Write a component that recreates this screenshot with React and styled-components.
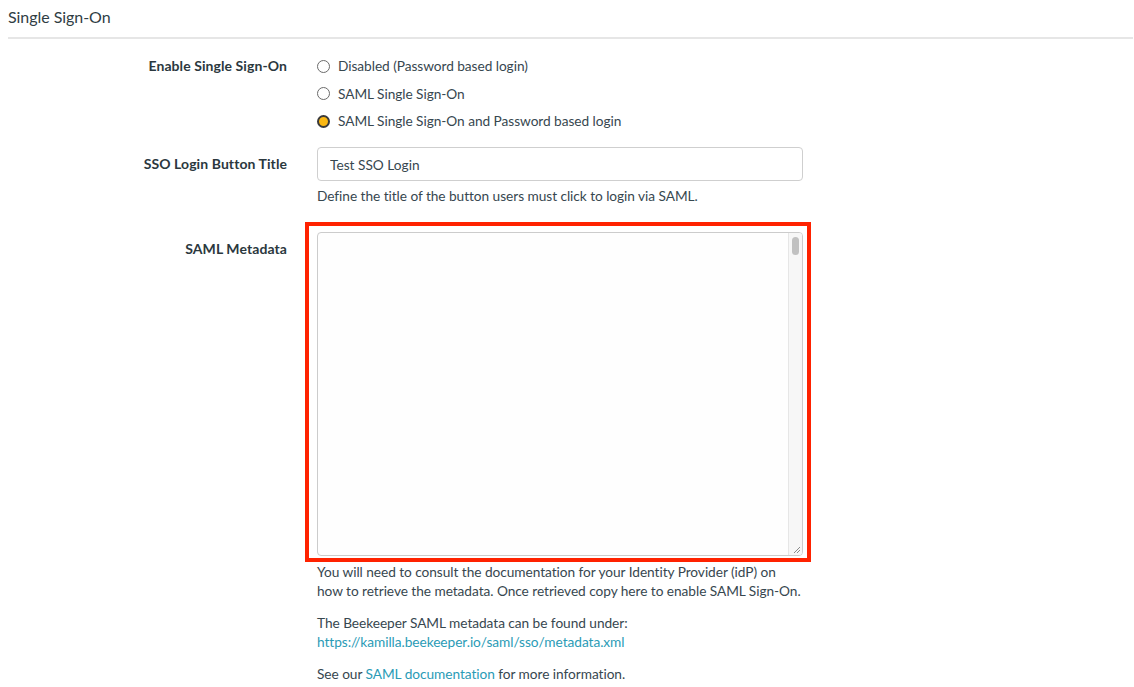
import React from "react";
import styled, { createGlobalStyle } from "styled-components";

const Global = createGlobalStyle`
  html, body { margin: 0; padding: 0; background: #fff; }
  body {
    font-family: Lato, "Noto Sans", sans-serif;
    font-size: 13.7px;
    letter-spacing: -0.05px;
    color: #37474f;
  }
  * { box-sizing: border-box; }
`;

const Page = styled.div`
  padding: 0 1px 0 8px;
`;

const Heading = styled.h2`
  margin: 0;
  padding-top: 7px;
  height: 39px;
  font-size: 16px;
  font-weight: 400;
  line-height: 20px;
  color: #2f3d44;
  border-bottom: 2px solid #e6e6e6;
`;

const Form = styled.div`
  display: flex;
  flex-direction: column;
  padding-top: 17px;
`;

const Row = styled.div`
  display: grid;
  grid-template-columns: 279px 486px;
  column-gap: 30px;
  margin-bottom: ${(p) => p.$mb || 0}px;
`;

const Label = styled.div`
  text-align: right;
  font-weight: 700;
  font-size: 14px;
  letter-spacing: 0.08px;
  line-height: 20px;
  padding-top: ${(p) => p.$pt || 0}px;
  color: #2b383e;
`;

const Control = styled.div`
  display: flex;
  flex-direction: column;
`;

const RadioRow = styled.label`
  display: flex;
  align-items: center;
  gap: 8px;
  height: 20px;
  line-height: 20px;
  margin-bottom: 7.5px;
  color: #37474f;
  &:last-child { margin-bottom: 0; }
`;

const RadioDot = styled.span`
  width: 13px;
  height: 13px;
  border-radius: 50%;
  flex: none;
  border: ${(p) => (p.$on ? "2px solid #3a3a3a" : "1px solid #6b6b6b")};
  background: ${(p) => (p.$on ? "#fbb813" : "#fff")};
`;

const TextInput = styled.input`
  height: 34px;
  width: 100%;
  border: 1px solid #cfcfcf;
  border-radius: 4px;
  padding: 0 12px;
  font-family: inherit;
  font-size: 13.7px;
  color: #37474f;
  outline: none;
`;

const Help = styled.p`
  margin: ${(p) => p.$mt || 0}px 0 0;
  line-height: 19px;
  color: #37474f;
`;

const Link = styled.a`
  color: #2a9bb6;
  text-decoration: none;
`;

const AreaWrap = styled.div`
  position: relative;
  height: 324px;
`;

const Area = styled.textarea`
  display: block;
  width: 100%;
  height: 324px;
  border: 1px solid #cccccc;
  border-radius: 4px;
  background: #fefefe;
  font-family: inherit;
  font-size: 14px;
  line-height: 20px;
  padding: 6px 26px 6px 12px;
  resize: none;
  overflow: hidden;
  outline: none;
`;

const ScrollTrack = styled.div`
  position: absolute;
  top: 1px;
  right: 1px;
  bottom: 1px;
  width: 14px;
  background: #f7f7f7;
  border-left: 1px solid #e6e6e6;
  border-radius: 0 3px 3px 0;
  padding: 4px 3px 0 3px;
  pointer-events: none;
`;

const ScrollThumb = styled.div`
  width: 7px;
  height: 18px;
  border-radius: 4px;
  background: #c1c1c1;
`;

const Grip = styled.svg`
  position: absolute;
  right: 2px;
  bottom: 2px;
  width: 9px;
  height: 9px;
`;

const Highlight = styled.div`
  position: absolute;
  left: -12px;
  right: -8px;
  top: -10px;
  bottom: -6px;
  border: 4px solid #ff2200;
  pointer-events: none;
`;

const options = [
  "Disabled (Password based login)",
  "SAML Single Sign-On",
  "SAML Single Sign-On and Password based login",
];

export default function App() {
  return (
    <Page>
      <Global />
      <Heading>Single Sign-On</Heading>
      <Form>
        <Row $mb={16}>
          <Label>Enable Single Sign-On</Label>
          <Control>
            {options.map((o, i) => (
              <RadioRow key={o}>
                <RadioDot $on={i === 2} />
                {o}
              </RadioRow>
            ))}
          </Control>
        </Row>
        <Row $mb={27}>
          <Label $pt={7}>SSO Login Button Title</Label>
          <Control>
            <TextInput defaultValue="Test SSO Login" />
            <Help $mt={5}>Define the title of the button users must click to login via SAML.</Help>
          </Control>
        </Row>
        <Row>
          <Label $pt={7}>SAML Metadata</Label>
          <Control>
            <AreaWrap>
              <Area defaultValue="" />
              <ScrollTrack>
                <ScrollThumb />
              </ScrollTrack>
              <Grip viewBox="0 0 9 9">
                <path d="M8 2 L2 8 M8 5 L5 8" stroke="#8a8a8a" strokeWidth="1" fill="none" />
              </Grip>
              <Highlight />
            </AreaWrap>
            <Help $mt={6}>
              You will need to consult the documentation for your Identity Provider (idP) on
              how to retrieve the metadata. Once retrieved copy here to enable SAML Sign-On.
            </Help>
            <Help $mt={13}>
              The Beekeeper SAML metadata can be found under:
              <br />
              <Link href="#">https://kamilla.beekeeper.io/saml/sso/metadata.xml</Link>
            </Help>
            <Help $mt={13}>
              See our <Link href="#">SAML documentation</Link> for more information.
            </Help>
          </Control>
        </Row>
      </Form>
    </Page>
  );
}
